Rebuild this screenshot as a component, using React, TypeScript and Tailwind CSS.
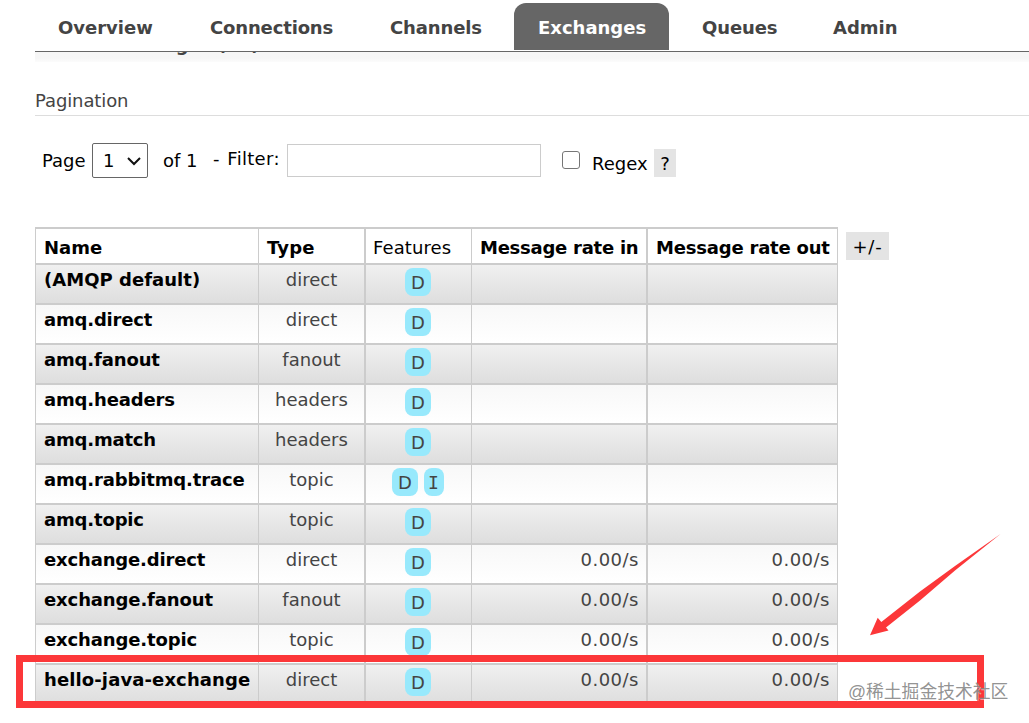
import React from "react";

type Row = { name: string; type: string; flags: string[]; rate?: string; spacing: string };

const rows: Row[] = [
  { name: "(AMQP default)", type: "direct", flags: ["D"], spacing: "tracking-[0.03px]" },
  { name: "amq.direct", type: "direct", flags: ["D"], spacing: "tracking-[-0.18px]" },
  { name: "amq.fanout", type: "fanout", flags: ["D"], spacing: "tracking-[-0.14px]" },
  { name: "amq.headers", type: "headers", flags: ["D"], spacing: "tracking-[-0.15px]" },
  { name: "amq.match", type: "headers", flags: ["D"], spacing: "tracking-[-0.18px]" },
  { name: "amq.rabbitmq.trace", type: "topic", flags: ["D", "I"], spacing: "tracking-[-0.15px]" },
  { name: "amq.topic", type: "topic", flags: ["D"], spacing: "tracking-[-0.16px]" },
  { name: "exchange.direct", type: "direct", flags: ["D"], rate: "0.00/s", spacing: "tracking-[-0.16px]" },
  { name: "exchange.fanout", type: "fanout", flags: ["D"], rate: "0.00/s", spacing: "tracking-[-0.12px]" },
  { name: "exchange.topic", type: "topic", flags: ["D"], rate: "0.00/s", spacing: "tracking-[-0.13px]" },
  { name: "hello-java-exchange", type: "direct", flags: ["D"], rate: "0.00/s", spacing: "tracking-[0.11px]" },
];

const columns = "grid grid-cols-[223px_106px_107px_175px_192px]";

function Tab({ label, className }: { label: string; className: string }) {
  return (
    <a className={`flex h-[47px] shrink-0 items-center rounded-t-[12px] pt-[3px] font-bold ${className}`}>
      {label}
    </a>
  );
}

function Nav() {
  return (
    <nav className="ml-[35px] flex h-[52px] border-b border-[#666] pt-[3px] text-[#444]">
      <Tab label="Overview" className="w-[151px] pl-[23px]" />
      <Tab label="Connections" className="w-[180px] pl-6 tracking-[-0.15px]" />
      <Tab label="Channels" className="w-[148px] pl-6 tracking-[-0.12px]" />
      <Tab label="Exchanges" className="w-[155px] bg-[#666] pl-6 text-white" />
      <Tab label="Queues" className="ml-2 w-[132px] pl-[25px] tracking-[-0.12px]" />
      <Tab label="Admin" className="w-[120px] pl-6" />
    </nav>
  );
}

function Flag({ label }: { label: string }) {
  return (
    <span
      className={`flex h-7 items-center justify-center rounded-[8px] bg-[#98e9fc] pt-px text-[#444] ${
        label === "I" ? "w-5 font-['DejaVu_Sans_Mono',monospace]" : "w-[26px] pl-px"
      }`}
    >
      {label}
    </span>
  );
}

function ExchangeRow({ row, even }: { row: Row; even: boolean }) {
  const shade = even
    ? "bg-linear-to-b from-[#f0f0f0] to-[#dedede]"
    : "bg-linear-to-b from-[#f8f8f8] to-white";
  return (
    <div className={`${columns} h-10 border-t-2 border-[#ccc] leading-[30px] text-[#444] ${shade}`}>
      <div className={`border-l border-[#ccc] pl-2 font-bold text-black ${row.spacing}`}>{row.name}</div>
      <div className="border-l border-[#ccc] text-center">{row.type}</div>
      <div className="flex justify-center gap-1.5 border-l-2 border-[#ccc] pr-0.5 pt-[3px]">
        {row.flags.map((f) => (
          <Flag key={f} label={f} />
        ))}
      </div>
      <div className="border-l border-[#ccc] pr-[7px] text-right tracking-[0.5px]">{row.rate}</div>
      <div className="border-x border-l-2 border-[#ccc] pr-[7px] text-right tracking-[0.5px]">{row.rate}</div>
    </div>
  );
}

export default function App() {
  return (
    <div className="relative h-[723px] w-[1029px] overflow-hidden bg-white font-['DejaVu_Sans',sans-serif] text-[18px] leading-[22px] text-black">
      <Nav />
      <div className="ml-[35px] flex h-[10px] items-end overflow-hidden bg-linear-to-b from-[#f6f6f6] from-60% to-[#fcfcfc] pl-9 font-bold text-[#444]">
        <span className="-translate-y-[6px] whitespace-nowrap">All exchanges (11)</span>
      </div>
      <h2 className="ml-[35px] flex h-[54px] items-end border-b border-[#ddd] pb-[3px] tracking-[-0.1px] text-[#444]">
        <span>Pagination</span>
      </h2>

      <div className="ml-[42px] mt-[27px] flex h-[84px] items-start">
        <span className="w-[50px] pt-[7px]">Page</span>
        <span className="flex h-[35px] w-14 items-center justify-between rounded-[2px] border border-[#666] pl-[10px] pr-[6px]">
          1
          <svg width="14" height="10" viewBox="0 0 14 10" fill="none" stroke="#111" strokeWidth="2">
            <path d="M1 2l6 6 6-6" />
          </svg>
        </span>
        <span className="w-[65px] whitespace-nowrap pl-[15px] pt-[7px]">of 1</span>
        <span className="w-[74px] whitespace-nowrap pt-[5px] tracking-[0.3px] [word-spacing:1.5px]">- Filter:</span>
        <span className="mt-px h-[33px] w-[254px] border border-[#ccc]" />
        <span className="ml-[21px] mt-2 h-[18px] w-[18px] rounded-[3px] border-[1.5px] border-[#767676]" />
        <span className="ml-3 w-[62px] pt-[10px]">Regex</span>
        <span className="mt-1.5 flex h-7 w-[22px] items-center justify-center bg-[#e4e4e4] pt-px">?</span>
      </div>

      <div className="ml-[35px] flex">
        <div className="w-[803px]">
          <div className={`${columns} h-9 border-t-2 border-[#ccc] whitespace-nowrap font-bold leading-[37px]`}>
            <div className="border-l border-[#ccc] pl-2">Name</div>
            <div className="border-l border-[#ccc] pl-2 tracking-[0.2px]">Type</div>
            <div className="border-l-2 border-[#ccc] pl-[7px] font-normal tracking-[0.1px]">Features</div>
            <div className="border-l border-[#ccc] pl-2 tracking-[-0.25px]">Message rate in</div>
            <div className="border-x border-l-2 border-[#ccc] pl-2 tracking-[-0.2px]">Message rate out</div>
          </div>
          {rows.map((r, i) => (
            <ExchangeRow key={r.name} row={r} even={i % 2 === 0} />
          ))}
        </div>
        <span className="ml-2 mt-[5px] flex h-7 w-[43px] items-center justify-center bg-[#e4e4e4] pt-px tracking-[0.8px]">+/-</span>
      </div>

      <div className="absolute left-4 top-[655px] h-[53px] w-[968px] border-[7px] border-[#fc3739]" />
      <svg className="absolute left-[860px] top-[525px]" width="150" height="120" viewBox="860 525 150 120">
        <path
          d="M1000.5 534L955 566 920 591.5 881.3 622 877.7 617.7 870 635.2 888.5 630.6 886 627.5 920 600.5 955 570.5z"
          fill="#fc3739"
        />
      </svg>
      <span className="absolute left-[848px] top-[681px] whitespace-nowrap font-['Liberation_Sans','Noto_Sans_CJK_SC',sans-serif] text-[17.8px] text-[#858585]/90 [text-shadow:1px_1px_0_rgba(255,255,255,0.5)]">
        @稀土掘金技术社区
      </span>
    </div>
  );
}
